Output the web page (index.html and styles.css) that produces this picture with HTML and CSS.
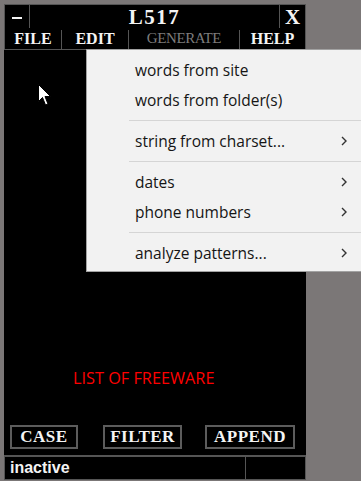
FILE: index.html
```html
<!DOCTYPE html>
<html lang="en">
<head>
    <meta charset="UTF-8" />
    <meta name="viewport" content="width=device-width, initial-scale=1.0"/>
    <title>L517</title>
    <link rel="stylesheet" href="styles.css">
</head>
<body>
    <div class="window">
        <div class="titlebar">
            <div class="cell minus"><span class="bar"></span></div>
            <div class="cell title">L517</div>
            <div class="cell">X</div>
        </div>
        <div class="menubar">
            <div class="cell">FILE</div>
            <div class="cell">EDIT</div>
            <div class="cell disabled">GENERATE</div>
            <div class="cell">HELP</div>
        </div>

        <div class="main">
            <div class="notice">LIST OF FREEWARE</div>
            <div class="buttons">
                <button class="btn btn-case">CASE</button>
                <button class="btn btn-filter">FILTER</button>
                <button class="btn btn-append">APPEND</button>
            </div>
        </div>

        <div class="statusbar">
            <div class="cell status">inactive</div>
            <div class="cell"></div>
        </div>
    </div>

    <!-- open GENERATE menu -->
    <div class="popup">
        <div class="item">words from site</div>
        <div class="item">words from folder(s)</div>
        <div class="sep"></div>
        <div class="item">string from charset...<span class="arrow"><svg width="6" height="10" viewBox="0 0 6 10"><path d="M1 1 L5 5 L1 9" fill="none" stroke="#333" stroke-width="1.4"/></svg></span></div>
        <div class="sep"></div>
        <div class="item">dates<span class="arrow"><svg width="6" height="10" viewBox="0 0 6 10"><path d="M1 1 L5 5 L1 9" fill="none" stroke="#333" stroke-width="1.4"/></svg></span></div>
        <div class="item">phone numbers<span class="arrow"><svg width="6" height="10" viewBox="0 0 6 10"><path d="M1 1 L5 5 L1 9" fill="none" stroke="#333" stroke-width="1.4"/></svg></span></div>
        <div class="sep"></div>
        <div class="item">analyze patterns...<span class="arrow"><svg width="6" height="10" viewBox="0 0 6 10"><path d="M1 1 L5 5 L1 9" fill="none" stroke="#333" stroke-width="1.4"/></svg></span></div>
    </div>

    <svg class="cursor" width="15" height="24" viewBox="0 0 15 24">
        <path d="M0.5 0.5 L0.5 17.5 L4.5 13.5 L7.5 21 L10 20 L7 12.5 L12.5 12.5 Z" fill="#fff" stroke="#000" stroke-width="1"/>
    </svg>
</body>
</html>
```

FILE: styles.css
```css
body {
    margin: 0;
    height: 481px;
    overflow: hidden;
    position: relative;
    background: #7b7777;
    font-family: 'Liberation Serif', serif;
    color: #f4f4f4;
}
.window {
    width: 302px;
    margin: 4px 0 0 4px;
    background: #555;
}
.cell {
    background: #000;
    display: flex;
    align-items: center;
    justify-content: center;
    font-weight: bold;
}
.titlebar {
    display: grid;
    grid-template-columns: 24px 1fr 25px;
    gap: 1px;
    padding: 1px 1px 0 1px;
    height: 22px;
    font-size: 21px;
}
.title {
    letter-spacing: 1.5px;
}
.minus .bar {
    width: 10px;
    height: 2px;
    background: #f4f4f4;
}
.menubar {
    display: grid;
    grid-template-columns: 56px 66px 110px 65px;
    gap: 1px;
    padding: 1px 1px 1px 1px;
    height: 21px;
    font-size: 16px;
}
.menubar .disabled {
    color: #7c7c7c;
    font-weight: normal;
    font-size: 15px;
    letter-spacing: -0.4px;
}
.main {
    background: #000;
    height: 405px;
    display: flex;
    flex-direction: column;
    justify-content: flex-end;
}
.notice {
    font-family: 'Open Sans', sans-serif;
    font-size: 16.3px;
    line-height: 20px;
    color: #f00;
    padding-left: 69px;
    margin-bottom: 37px;
}
.buttons {
    display: flex;
    padding: 0 0 6px 6px;
}
.btn {
    height: 24px;
    background: #000;
    border: 2px solid #5c5c5c;
    color: #f4f4f4;
    font-family: 'Liberation Serif', serif;
    font-weight: bold;
    font-size: 17px;
    letter-spacing: 0.5px;
    padding: 0;
}
.btn-case { width: 68px; margin-right: 25px; }
.btn-filter { width: 79px; margin-right: 23px; }
.btn-append { width: 90px; }
.statusbar {
    display: grid;
    grid-template-columns: 240px 1fr;
    gap: 1px;
    padding: 1px;
    margin-top: 1px;
    height: 22px;
}
.status {
    justify-content: flex-start;
    padding-left: 5px;
    font-family: 'Liberation Sans', Arial, sans-serif;
    font-size: 16px;
}
.popup {
    position: absolute;
    left: 86px;
    top: 49px;
    width: 290px;
    box-sizing: border-box;
    height: 223px;
    padding-top: 5px;
    background: #f2f2f2;
    border: 1px solid #a2a2a2;
    font-family: 'Open Sans', sans-serif;
    font-size: 15.5px;
    color: #151515;
}
.item {
    height: 30px;
    display: flex;
    align-items: center;
    padding-left: 48px;
    padding-right: 28px;
}
.arrow {
    margin-left: auto;
    display: flex;
}
.sep {
    height: 1px;
    background: #d5d5d5;
    margin: 5px 0 5px 42px;
}
.cursor {
    position: absolute;
    left: 38px;
    top: 84px;
}
```
